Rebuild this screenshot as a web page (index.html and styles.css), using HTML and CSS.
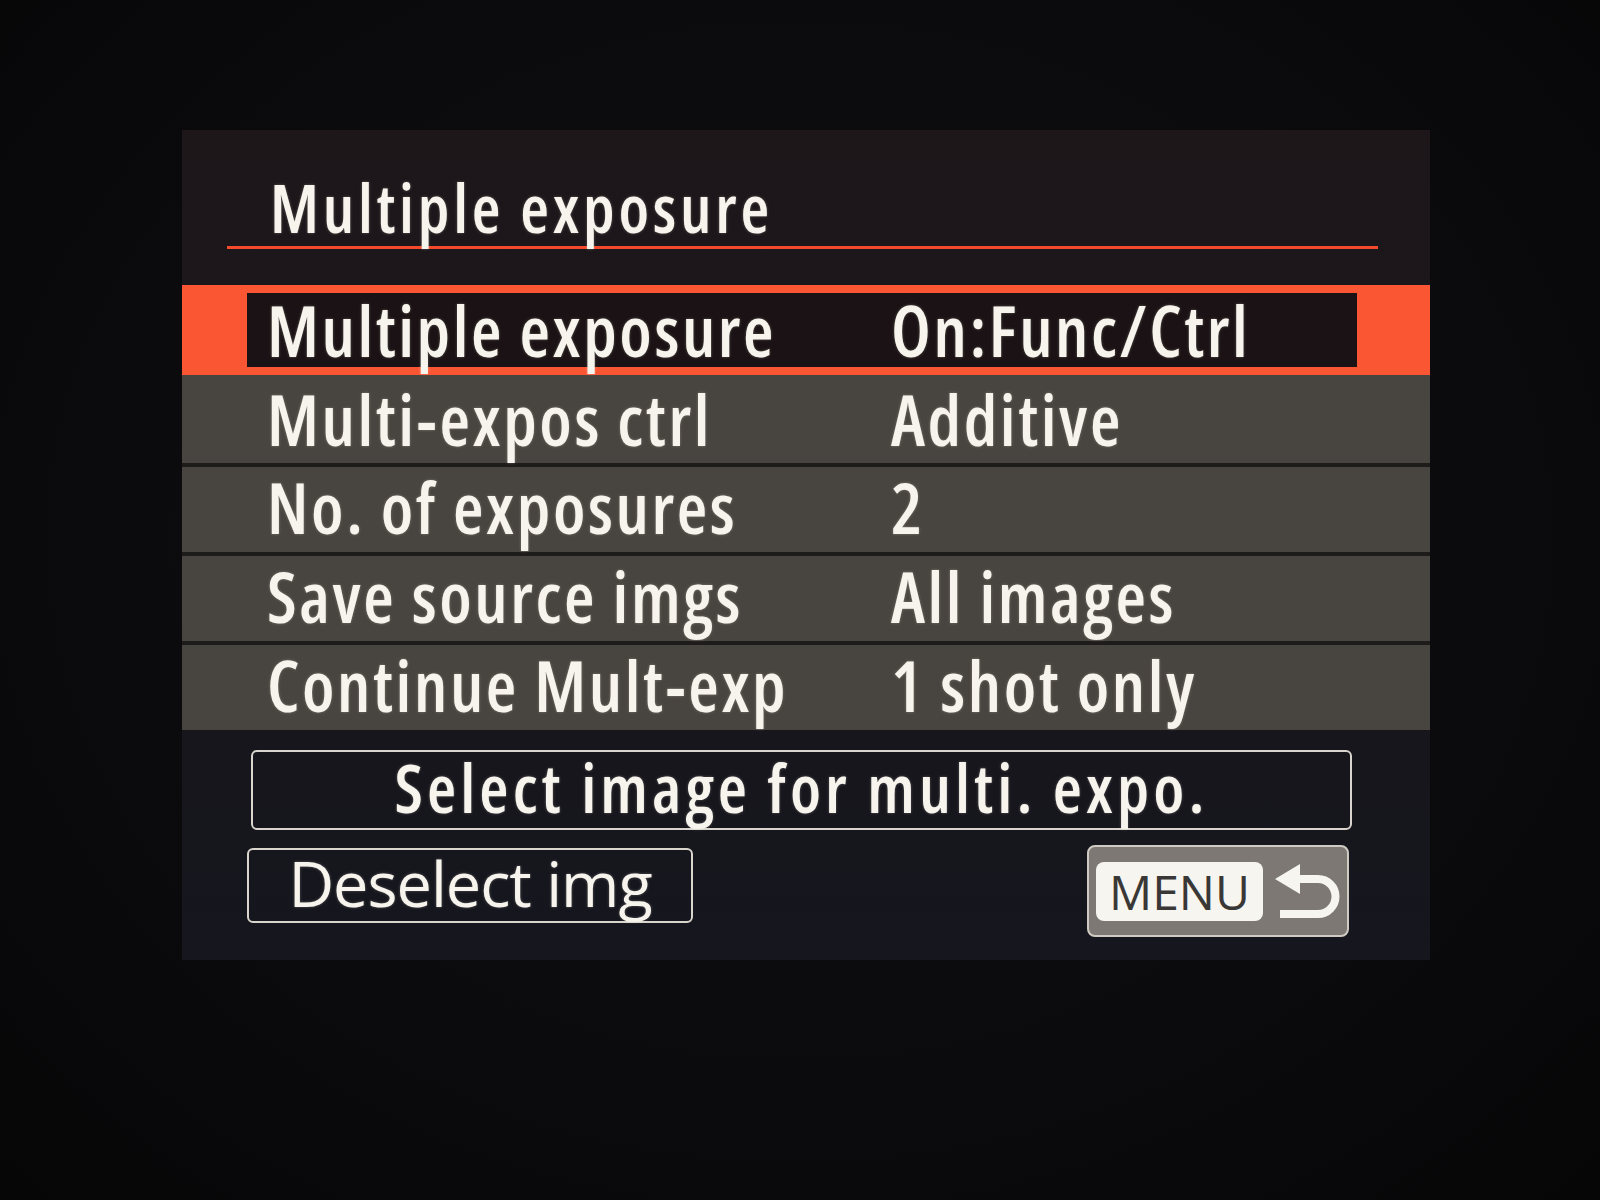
FILE: index.html
```html
<!DOCTYPE html>
<html lang="en">
<head>
<meta charset="utf-8">
<title>Multiple exposure</title>
<link rel="stylesheet" href="styles.css">
</head>
<body>
<div class="screen">
  <h1 class="title">Multiple exposure</h1>
  <div class="rule"></div>
  <ul class="menu">
    <li class="row sel"><div class="sel-inner"><span class="label">Multiple exposure</span><span class="value">On:Func/Ctrl</span></div></li>
    <li class="row first"><span class="label">Multi-expos ctrl</span><span class="value">Additive</span></li>
    <li class="row"><span class="label">No. of exposures</span><span class="value">2</span></li>
    <li class="row"><span class="label">Save source imgs</span><span class="value">All images</span></li>
    <li class="row"><span class="label">Continue Mult-exp</span><span class="value">1 shot only</span></li>
  </ul>
  <div class="action">Select image for multi. expo.</div>
  <div class="bottom">
    <div class="btn">Deselect img</div>
    <div class="menu-btn">
      <span class="menu-key">MENU</span>
      <svg class="back" width="72" height="60" viewBox="0 0 72 60">
        <polygon points="3,18 28,3 28,33" fill="#f7f5f0"/>
        <path d="M26 18 H46 A17.5 17.5 0 0 1 46 53 H8" fill="none" stroke="#f7f5f0" stroke-width="8"/>
      </svg>
    </div>
  </div>
</div>
</body>
</html>
```

FILE: styles.css
```css
html, body {
  margin: 0;
  padding: 0;
}
body {
  width: 1600px;
  height: 1200px;
  overflow: hidden;
  background: radial-gradient(ellipse at 50% 45%, #111013 0%, #0b0a0c 60%, #060607 100%);
  font-family: "Open Sans", "Noto Sans", sans-serif;
  color: #f6f4ec;
  padding-top: 130px;
  box-sizing: border-box;
}
.screen {
  margin-left: 182px;
  width: 1248px;
  height: 830px;
  background: linear-gradient(180deg, #1d171a 0%, #1a161b 45%, #15161e 100%);
  box-sizing: border-box;
  padding-top: 44px;
  text-shadow: 0 0 3px rgba(255, 250, 235, 0.3);
}
.title {
  margin: 0 0 0 88px;
  font-size: 66px;
  line-height: 66px;
  font-weight: 600;
  font-stretch: 75%;
  letter-spacing: 3.8px;
}
.rule {
  margin: 6px 0 0 45px;
  width: 1151px;
  height: 3px;
  background: #f44a2c;
}
.menu {
  list-style: none;
  margin: 36px 0 0 0;
  padding: 0;
}
.row {
  display: grid;
  grid-template-columns: 624px 1fr;
  padding-left: 85px;
  padding-top: 5px;
  height: 80px;
  background: #48443f;
  border-top: 4px solid #1e1b1b;
  font-size: 70px;
  line-height: 70px;
  font-weight: 600;
  font-stretch: 75%;
  letter-spacing: 2.6px;
  white-space: nowrap;
}
.row.first {
  border-top: 0;
  height: 88px;
  padding-top: 9px;
  box-sizing: border-box;
}
.row.sel {
  display: block;
  height: 90px;
  padding: 8px 73px 8px 65px;
  box-sizing: border-box;
  border-top: 0;
  background: #fb5634;
}
.sel-inner {
  display: grid;
  grid-template-columns: 624px 1fr;
  height: 74px;
  padding: 2px 0 0 20px;
  box-sizing: border-box;
  background: #1a1214;
}
.action {
  margin: 20px 0 0 69px;
  width: 1101px;
  height: 80px;
  box-sizing: border-box;
  border: 2px solid #d9d5cd;
  border-radius: 6px;
  text-align: center;
  font-size: 67px;
  line-height: 70px;
  font-weight: 600;
  font-stretch: 75%;
  letter-spacing: 4.1px;
}
.bottom {
  display: flex;
  justify-content: space-between;
  align-items: flex-start;
  margin: 15px 81px 0 65px;
}
.btn {
  margin-top: 3px;
  width: 446px;
  height: 75px;
  box-sizing: border-box;
  border: 2px solid #d9d5cd;
  border-radius: 6px;
  text-align: center;
  font-size: 63px;
  line-height: 66px;
  font-weight: 400;
  font-stretch: 97%;
  letter-spacing: -1px;
}
.menu-btn {
  display: flex;
  align-items: center;
  width: 262px;
  height: 92px;
  box-sizing: border-box;
  padding: 0 0 0 7px;
  background: #7d7873;
  border: 2px solid #cfcac2;
  border-radius: 8px;
  text-shadow: none;
}
.menu-key {
  display: block;
  width: 167px;
  height: 59px;
  box-sizing: border-box;
  background: #f7f5f0;
  border-radius: 8px;
  color: #3a3836;
  font-size: 48px;
  line-height: 59px;
  font-weight: 400;
  text-align: center;
}
.back {
  display: block;
  margin-left: 9px;
}
```
